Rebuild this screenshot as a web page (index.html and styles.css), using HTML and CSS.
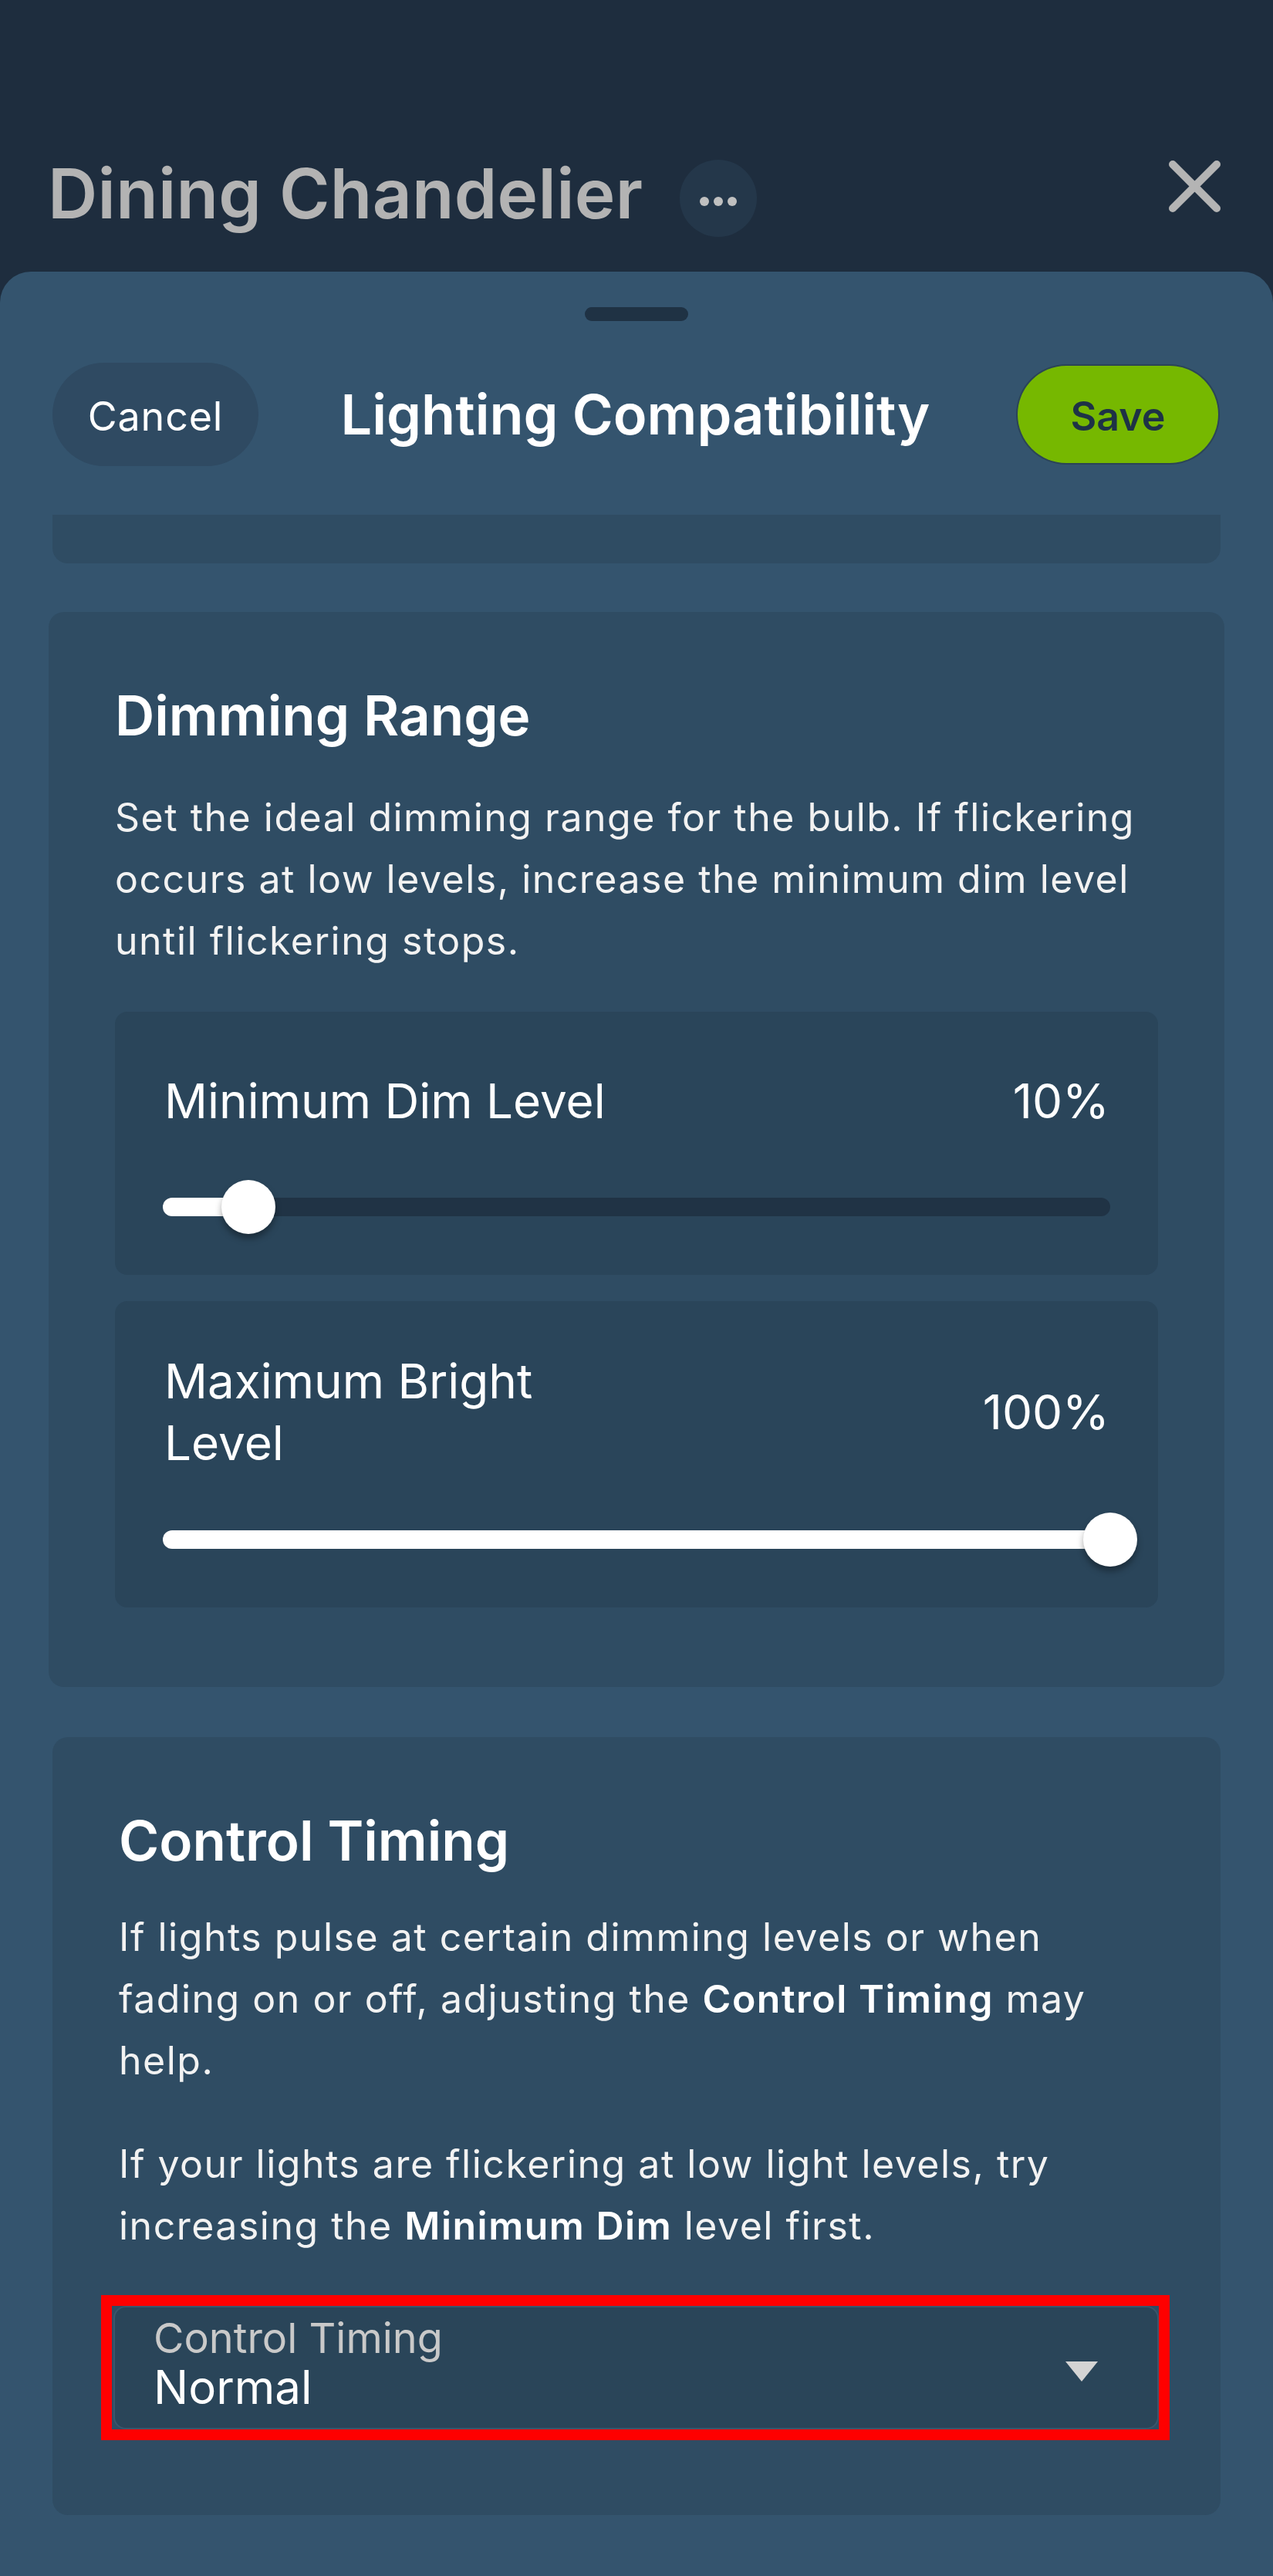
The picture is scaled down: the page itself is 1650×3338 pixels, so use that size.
FILE: index.html
```html
<!DOCTYPE html>
<html>
<head>
<link rel="stylesheet" href="styles.css">
</head>
<body>

<header class="topbar">
  <h1 class="device-name">Dining Chandelier</h1>
  <button class="more-btn"><span></span><span></span><span></span></button>
  <button class="close-btn">
    <svg width="67" height="67" viewBox="0 0 67 67">
      <path d="M5 5 L62 62 M62 5 L5 62" stroke="#b4b4b4" stroke-width="10" stroke-linecap="round" fill="none"/>
    </svg>
  </button>
</header>

<section class="sheet">
  <div class="handle"></div>

  <div class="toolbar">
    <button class="cancel">Cancel</button>
    <h2 class="sheet-title">Lighting Compatibility</h2>
    <button class="save">Save</button>
  </div>

  <div class="scroll">
    <div class="card card-stub"></div>

    <div class="card card-wide">
      <h3>Dimming Range</h3>
      <p>Set the ideal dimming range for the bulb. If flickering occurs at low levels, increase the minimum dim level until flickering stops.</p>

      <div class="level">
        <div class="level-row">
          <span class="level-label">Minimum Dim Level</span>
          <span class="level-value">10%</span>
        </div>
        <div class="slider">
          <div class="slider-fill" style="width: 9%"></div>
          <div class="slider-thumb" style="left: 9%"></div>
        </div>
      </div>

      <div class="level">
        <div class="level-row">
          <span class="level-label">Maximum Bright Level</span>
          <span class="level-value">100%</span>
        </div>
        <div class="slider">
          <div class="slider-fill" style="width: 100%"></div>
          <div class="slider-thumb" style="left: 100%"></div>
        </div>
      </div>
    </div>

    <div class="card">
      <h3>Control Timing</h3>
      <p>If lights pulse at certain dimming levels or when fading on or off, adjusting the <b>Control Timing</b> may help.</p>
      <p class="second">If your lights are flickering at low light levels, try increasing the <b>Minimum Dim</b> level first.</p>

      <div class="select">
        <div class="select-text">
          <div class="select-label">Control Timing</div>
          <div class="select-value">Normal</div>
        </div>
        <div class="select-arrow"></div>
      </div>
    </div>
  </div>
</section>

</body>
</html>
```

FILE: styles.css
```css
body {
  margin: 0;
  background-color: #1e2d3e;
  font-family: Inter, "Noto Sans", sans-serif;
  color: #ffffff;
}

button {
  font-family: inherit;
  border: 0;
  padding: 0;
  cursor: pointer;
}

.topbar {
  display: flex;
  align-items: flex-start;
  height: 352px;
  box-sizing: border-box;
  padding: 201px 68px 0 62px;
}

.device-name {
  margin: 0;
  font-size: 89px;
  line-height: 100px;
  font-weight: 600;
  color: #b3b3b3;
  letter-spacing: 0.3px;
}

.more-btn {
  width: 100px;
  height: 100px;
  margin: 6px 0 0 48px;
  border-radius: 50%;
  background-color: #24374a;
  display: flex;
  align-items: center;
  justify-content: center;
  gap: 6px;
  padding-top: 8px;
}

.more-btn span {
  width: 12px;
  height: 12px;
  border-radius: 50%;
  background-color: #c0c0c0;
}

.close-btn {
  margin: 7px 0 0 auto;
  width: 67px;
  height: 67px;
  background: none;
}

.close-btn svg {
  display: block;
}

.sheet {
  background-color: #34546e;
  border-radius: 40px 40px 0 0;
  min-height: 2986px;
  box-sizing: border-box;
  padding-top: 46px;
}

.handle {
  width: 134px;
  height: 18px;
  border-radius: 9px;
  background-color: #1f3244;
  margin: 0 auto;
}

.toolbar {
  display: grid;
  grid-template-columns: 1fr auto 1fr;
  align-items: center;
  margin-top: 54px;
  padding: 0 71px 0 68px;
}

.cancel {
  justify-self: start;
  width: 267px;
  height: 134px;
  border-radius: 67px;
  background-color: #2f4a62;
  color: #ffffff;
  font-size: 52px;
  letter-spacing: 0.8px;
  padding-top: 4px;
}

.save {
  justify-self: end;
  width: 260px;
  height: 126px;
  border-radius: 63px;
  background-color: #76b800;
  color: #1e3246;
  font-size: 52px;
  font-weight: 600;
  padding-top: 4px;
  box-shadow: 0 0 0 2px #2b4457;
}

.sheet-title {
  margin: 0;
  font-size: 72px;
  font-weight: 600;
  line-height: 84px;
}

.scroll {
  padding-top: 63px;
}

.card {
  background-color: #2f4c63;
  border-radius: 20px;
  margin: 0 68px 63px;
  padding: 92px 86px 111px;
}

.card-stub {
  height: 63px;
  padding: 0;
  border-radius: 0 0 20px 20px;
}

.card-wide {
  margin: 0 63px 65px;
  padding: 92px 86px 103px;
}

.card h3 {
  margin: 0;
  font-size: 71px;
  line-height: 84px;
  font-weight: 600;
}

.card p {
  margin: 43px 0 0;
  font-size: 50px;
  line-height: 80px;
  letter-spacing: 1.5px;
  color: #f2f2f2;
}

.card-wide p {
  margin-top: 50px;
}

.card p.second {
  margin-top: 54px;
}

.card p b {
  font-weight: 600;
  color: #ffffff;
}

.level {
  background-color: #2a455a;
  border-radius: 16px;
  padding: 64px 62px 53px;
  margin-top: 52px;
}

.level + .level {
  margin-top: 34px;
}

.level-row {
  display: flex;
  justify-content: space-between;
  align-items: center;
  min-height: 104px;
  padding: 0 1px 0 2px;
  font-size: 62px;
  line-height: 80px;
}

.level-label {
  max-width: 600px;
}

.slider {
  position: relative;
  height: 70px;
  margin-top: 50px;
}

.slider::before {
  content: "";
  position: absolute;
  left: 0;
  right: 0;
  top: 23px;
  height: 24px;
  border-radius: 12px;
  background-color: #203345;
}

.slider-fill {
  position: absolute;
  left: 0;
  top: 23px;
  height: 24px;
  border-radius: 12px;
  background-color: #ffffff;
}

.slider-thumb {
  position: absolute;
  top: 0;
  width: 70px;
  height: 70px;
  margin-left: -35px;
  border-radius: 50%;
  background-color: #ffffff;
  box-shadow: 0 6px 8px rgba(0, 0, 0, 0.35);
}

.select {
  position: relative;
  display: flex;
  align-items: center;
  height: 160px;
  box-sizing: border-box;
  margin: 64px -6px 0 -7px;
  padding: 9px 77px 0 50px;
  background-color: #2a4559;
  border: 2px solid #3b566c;
  border-radius: 16px;
}

.select::after {
  content: "";
  position: absolute;
  top: -16px;
  left: -18px;
  right: -16px;
  bottom: -16px;
  border: 14px solid #ff0000;
}

.select-text {
  flex: 1;
  align-self: flex-start;
}

.select-label {
  font-size: 54px;
  line-height: 62px;
  color: #c9c9c9;
}

.select-value {
  font-size: 60px;
  line-height: 70px;
  margin-top: -3px;
}

.select-arrow {
  width: 0;
  height: 0;
  border-left: 21px solid transparent;
  border-right: 21px solid transparent;
  border-top: 26px solid #d4d4d4;
}
```
